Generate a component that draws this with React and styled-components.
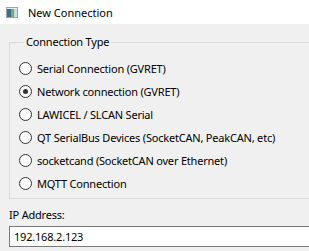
import React from "react";
import styled, { createGlobalStyle } from "styled-components";

const GlobalStyle = createGlobalStyle`
  html, body {
    margin: 0;
    padding: 0;
    background: #f0f0f0;
    overflow: hidden;
  }
  body {
    font-family: "Noto Sans", "Liberation Sans", sans-serif;
    font-size: 11px;
    letter-spacing: -0.2px;
    color: #000;
  }
`;

const Window = styled.div`
  width: 309px;
  height: 251px;
  background: #f0f0f0;
  display: flex;
  flex-direction: column;
  overflow: hidden;
`;

const TitleBar = styled.div`
  height: 24px;
  background: #fff;
  display: flex;
  align-items: center;
  padding-left: 6px;
  gap: 10px;
  letter-spacing: 0;
`;

const Body = styled.div`
  padding: 11px 0 0 9px;
  display: flex;
  flex-direction: column;
`;

const GroupBox = styled.fieldset`
  margin: 0;
  margin-right: -20px;
  border: 1px solid #dcdcdc;
  border-radius: 0;
  padding: 8px 0 2px 9px;
  height: 164px;
  box-sizing: border-box;
  legend {
    padding: 0 2px;
    margin-left: 5px;
    line-height: 14px;
  }
`;

const RadioRow = styled.label`
  display: flex;
  align-items: center;
  height: 23px;
  gap: 5px;
  white-space: nowrap;
`;

const Circle = styled.span`
  width: 11px;
  height: 11px;
  border: 1px solid #333;
  border-radius: 50%;
  background: #fff;
  display: flex;
  align-items: center;
  justify-content: center;
  flex: none;
  &::after {
    content: "";
    width: 5px;
    height: 5px;
    border-radius: 50%;
    background: ${(p) => (p.$checked ? "#333" : "transparent")};
  }
`;

const Label = styled.div`
  margin-top: 8px;
  height: 15px;
  line-height: 15px;
`;

const Input = styled.div`
  margin-top: 4px;
  margin-right: -20px;
  height: 19px;
  border: 1px solid #7a7a7a;
  border-right: none;
  background: #fff;
  padding-left: 4px;
  display: flex;
  align-items: center;
`;

const AppIcon = () => (
  <svg width="12" height="11" viewBox="0 0 12 11">
    <rect x="0.5" y="0.5" width="11" height="10" fill="#e8eef2" stroke="#9aa6ae" />
    <rect x="1" y="2" width="4" height="8" fill="#3f6a8a" />
    <rect x="5" y="2" width="3" height="8" fill="#6fae70" />
    <rect x="8" y="2" width="3" height="8" fill="#cfd8de" />
  </svg>
);

const options = [
  "Serial Connection (GVRET)",
  "Network connection (GVRET)",
  "LAWICEL / SLCAN Serial",
  "QT SerialBus Devices (SocketCAN, PeakCAN, etc)",
  "socketcand (SocketCAN over Ethernet)",
  "MQTT Connection",
];

export default function App() {
  return (
    <Window>
      <GlobalStyle />
      <TitleBar>
        <AppIcon />
        <span>New Connection</span>
      </TitleBar>
      <Body>
        <GroupBox>
          <legend>Connection Type</legend>
          {options.map((o, i) => (
            <RadioRow key={o}>
              <Circle $checked={i === 1} />
              {o}
            </RadioRow>
          ))}
        </GroupBox>
        <Label>IP Address:</Label>
        <Input>192.168.2.123</Input>
      </Body>
    </Window>
  );
}
